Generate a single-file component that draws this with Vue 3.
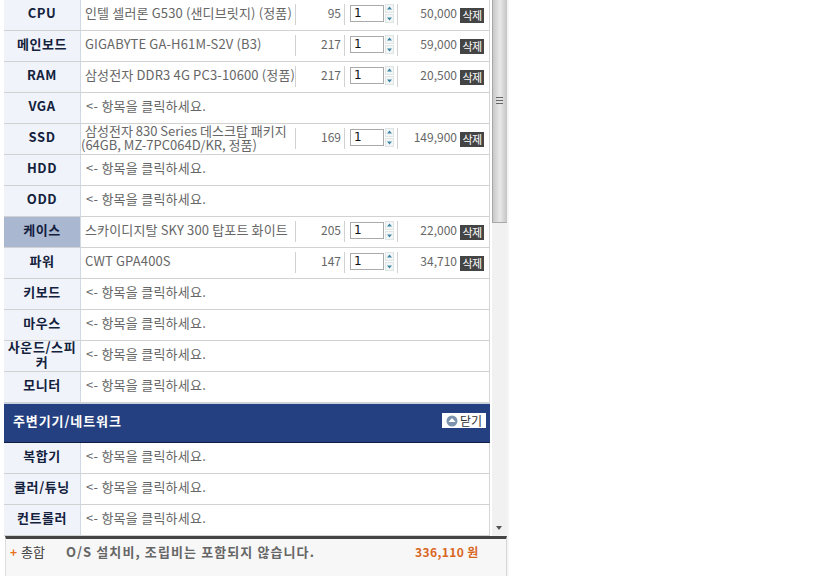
<script setup>
const up = [
  { label: 'CPU', name: '인텔 셀러론 G530 (샌디브릿지) (정품)', w: 95, price: '50,000' },
  { label: '메인보드', name: 'GIGABYTE GA-H61M-S2V (B3)', w: 217, price: '59,000' },
  { label: 'RAM', name: '삼성전자 DDR3 4G PC3-10600 (정품)', w: 217, price: '20,500' },
  { label: 'VGA' },
  { label: 'SSD', name: '삼성전자 830 Series 데스크탑 패키지 (64GB, MZ-7PC064D/KR, 정품)', w: 169, price: '149,900', two: true },
  { label: 'HDD' },
  { label: 'ODD' },
  { label: '케이스', name: '스카이디지탈 SKY 300 탑포트 화이트', w: 205, price: '22,000', active: true },
  { label: '파워', name: 'CWT GPA400S', w: 147, price: '34,710' },
  { label: '키보드' },
  { label: '마우스' },
  { label: '사운드/스피커', wrap: true },
  { label: '모니터' },
]
const down = [{ label: '복합기' }, { label: '쿨러/튜닝' }, { label: '컨트롤러' }]
const hint = '<- 항목을 클릭하세요.'
</script>

<template>
  <div class="page">
    <div class="scrollarea">
      <div class="list">
        <div v-for="r in up" :key="r.label" class="row">
          <div class="label" :class="{ active: r.active, wrap: r.wrap }">{{ r.label }}</div>
          <template v-if="r.name">
            <div class="name" :class="{ two: r.two }">{{ r.name }}</div>
            <div class="watt"><span>{{ r.w }}</span></div>
            <div class="qty">
              <span class="input">1</span>
              <span class="spin">
                <svg width="9" height="9" viewBox="0 0 9 9"><rect x=".5" y=".5" width="8" height="8" fill="#f2f6f6" stroke="#dfe5e5"/><path d="M4.5 2.5 7 5.5H2z" fill="#3d85a6"/></svg>
                <svg width="9" height="9" viewBox="0 0 9 9"><rect x=".5" y=".5" width="8" height="8" fill="#f2f6f6" stroke="#dfe5e5"/><path d="M4.5 6.5 7 3.5H2z" fill="#3d85a6"/></svg>
              </span>
            </div>
            <div class="price">{{ r.price }}</div>
            <div class="del"><span>삭제</span></div>
          </template>
          <div v-else class="hint">{{ hint }}</div>
        </div>
        <div class="section">
          <span>주변기기/네트워크</span>
          <span class="close">
            <svg width="12" height="12" viewBox="0 0 12 12"><circle cx="6" cy="6" r="5.5" fill="#7d93ad"/><path d="M6 3 9.500 7H2.500z" fill="#fff"/></svg>
            닫기
          </span>
        </div>
        <div v-for="r in down" :key="r.label" class="row">
          <div class="label">{{ r.label }}</div>
          <div class="hint">{{ hint }}</div>
        </div>
      </div>
      <div class="scrollbar">
        <div class="thumb"><i></i><i></i><i></i></div>
        <div class="arrow"></div>
      </div>
    </div>
    <div class="total">
      <span class="plus">+</span>
      <span class="t-label">총합</span>
      <span class="t-note">O/S 설치비, 조립비는 포함되지 않습니다.</span>
      <span class="t-sum">336,110 원</span>
    </div>
  </div>
</template>

<style scoped>
.page {
  width: 507px;
  height: 576px;
  overflow: hidden;
  border-right: 2px solid #f5f5f5;
  font-family: "Noto Sans CJK KR", "DejaVu Sans", sans-serif;
  font-size: 13px;
  color: #666;
  background: #fff;
}
.scrollarea {
  height: 536px;
  display: flex;
  overflow: hidden;
  padding-left: 4px;
}
.list {
  width: 485px;
  flex: none;
  border-right: 1px solid #d5d5d5;
}
.row {
  height: 31px;
  box-sizing: border-box;
  border-bottom: 1px solid #d2d2d2;
  display: flex;
  align-items: stretch;
}
.label {
  width: 77px;
  flex: none;
  box-sizing: border-box;
  background: #f0f4fa;
  border-right: 1px solid #d0d8e4;
  padding-bottom: 5px;
  display: flex;
  align-items: center;
  justify-content: center;
  text-align: center;
  font-weight: 700;
  font-size: 13px;
  letter-spacing: 0.6px;
  color: #14213d;
}
.label.active { background: #a9b7d1; }
.label.wrap { line-height: 15px; padding: 0 1px 4px; word-break: break-all; }
.name {
  width: 214px;
  flex: none;
  box-sizing: border-box;
  padding: 0 0 5px 4px;
  display: flex;
  align-items: center;
  white-space: nowrap;
  letter-spacing: 0.15px;
}
.name.two {
  display: block;
  white-space: normal;
  padding: 0;
  line-height: 14px;
  text-indent: 4px;
  word-break: keep-all;
  letter-spacing: 0;
}
.watt {
  width: 49px;
  flex: none;
  box-sizing: border-box;
  border-left: 1px solid #d2d2d2;
  margin: 4px 0 5px;
  padding: 0 3px 4px 0;
  display: flex;
  align-items: center;
  justify-content: flex-end;
  font-size: 12px;
}
.qty {
  width: 54px;
  flex: none;
  box-sizing: border-box;
  border-left: 1px solid #d2d2d2;
  border-right: 1px solid #d2d2d2;
  margin: 4px 0 5px;
  padding: 0 0 2px 5px;
  display: flex;
  align-items: center;
  gap: 1px;
}
.input {
  width: 34px;
  height: 17px;
  box-sizing: border-box;
  border: 1px solid #aaa;
  padding-left: 3px;
  font: 12px/15px "DejaVu Sans", sans-serif;
  color: #111;
  background: #fff;
}
.spin { display: flex; flex-direction: column; gap: 1px; }
.spin svg { display: block; }
.price {
  width: 59px;
  flex: none;
  padding-bottom: 5px;
  font-size: 12px;
  display: flex;
  align-items: center;
  justify-content: flex-end;
}
.del {
  flex: none;
  padding-left: 3px;
  padding-top: 1px;
  display: flex;
  align-items: center;
}
.del span {
  width: 24px;
  height: 15px;
  background: #444;
  color: #fff;
  font-size: 11px;
  letter-spacing: -0.5px;
  line-height: 15px;
  text-align: center;
}
.hint {
  padding: 0 0 5px 5px;
  display: flex;
  align-items: center;
  letter-spacing: 0.25px;
}
.section {
  height: 40px;
  box-sizing: border-box;
  margin-right: -1px;
  background: #254080;
  border-top: 1px solid #c5d2e6;
  border-bottom: 1px solid #101d40;
  padding: 0 4px 5px 9px;
  display: flex;
  align-items: center;
  justify-content: space-between;
  color: #fff;
  font-weight: 700;
  letter-spacing: 0.9px;
}
.close {
  width: 44px;
  height: 15px;
  background: #fff;
  color: #333;
  font-size: 12px;
  font-weight: 400;
  letter-spacing: 0;
  display: flex;
  align-items: center;
  gap: 2px;
  padding-left: 4px;
  box-sizing: border-box;
  line-height: 15px;
}
.close svg { flex: none; }
.scrollbar {
  margin-left: 2px;
  width: 16px;
  flex: none;
  background: #f1f1f1;
  position: relative;
}
.thumb {
  position: absolute;
  top: 0;
  left: 0;
  right: 0;
  height: 223px;
  box-sizing: border-box;
  border: 1px solid #a8a8a8;
  border-top: 0;
  background: linear-gradient(90deg, #c8c8c8, #e8e8e8 50%, #c4c4c4);
  padding: 97px 0 0 3px;
  display: flex;
  flex-direction: column;
  gap: 2px;
  align-items: flex-start;
}
.thumb i { width: 7px; height: 1px; background: #666; }
.arrow {
  position: absolute;
  bottom: 6px;
  left: 4px;
  border: 3.5px solid transparent;
  border-top: 4px solid #555;
  border-bottom: 0;
}
.total {
  height: 40px;
  box-sizing: border-box;
  margin-left: 5px;
  background: #f7f7f7;
  border-top: 3px solid #444;
  border-right: 1px solid #d5d5d5;
  border-left: 1px solid #ddd;
  display: flex;
  align-items: flex-start;
  padding-top: 4px;
  font-weight: 700;
  color: #666;
  line-height: 18px;
}
.plus { color: #e8721c; width: 10px; padding-left: 4px; font-size: 12px; box-sizing: content-box; }
.t-label { margin-left: 1px; width: 45px; font-weight: 400; color: #444; }
.t-note { width: 349px; letter-spacing: 1.1px; }
.t-sum { color: #d9661f; font-size: 12px; letter-spacing: 0.4px; }
</style>

<style>
html, body { background: #fff; }
</style>
